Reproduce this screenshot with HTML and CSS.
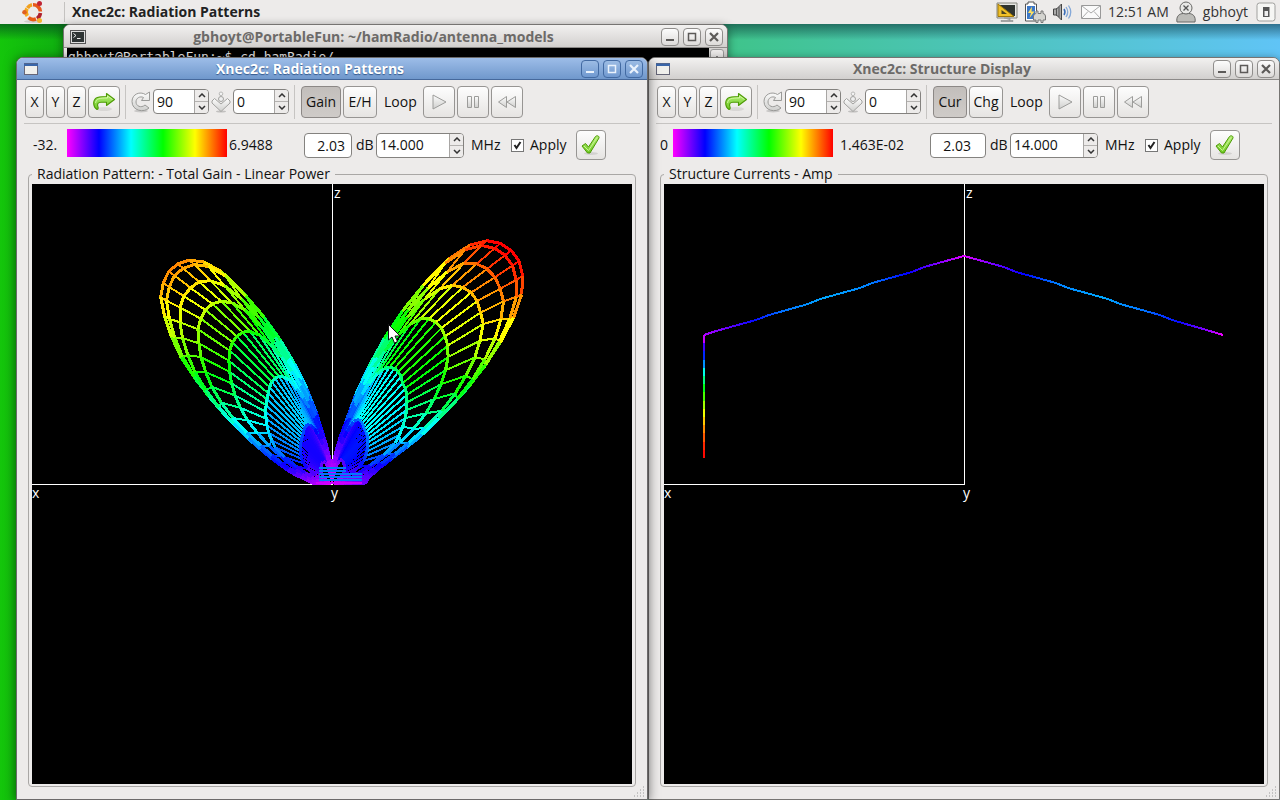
FILE: index.html
```html
<!DOCTYPE html>
<html lang="en">
<head>
<meta charset="utf-8">
<title>Xnec2c: Radiation Patterns</title>
<link rel="stylesheet" href="styles.css">
</head>
<body>
<svg class="defs" aria-hidden="true">
  <defs>
    <linearGradient id="g-green" x1="0" y1="0" x2="0" y2="1"><stop offset="0" stop-color="#b6f07c"/><stop offset="1" stop-color="#6cc820"/></linearGradient>
    <linearGradient id="g-grey" x1="0" y1="0" x2="0" y2="1"><stop offset="0" stop-color="#fcfcfc"/><stop offset="1" stop-color="#cfcfcd"/></linearGradient>
    <linearGradient id="g-wire-l" x1="0" y1="0" x2="1" y2="0"><stop offset="0" stop-color="#a800ff"/><stop offset=".08" stop-color="#7000ff"/><stop offset=".19" stop-color="#0808ff"/><stop offset=".3" stop-color="#0070ff"/><stop offset=".47" stop-color="#00a8ff"/><stop offset=".64" stop-color="#0080ff"/><stop offset=".78" stop-color="#0000ff"/><stop offset=".9" stop-color="#8000ff"/><stop offset="1" stop-color="#e000ff"/></linearGradient>
    <linearGradient id="g-wire-r" x1="0" y1="0" x2="1" y2="0"><stop offset="0" stop-color="#e000ff"/><stop offset=".1" stop-color="#8000ff"/><stop offset=".23" stop-color="#0000ff"/><stop offset=".36" stop-color="#0080ff"/><stop offset=".53" stop-color="#00a8ff"/><stop offset=".7" stop-color="#0070ff"/><stop offset=".83" stop-color="#0808ff"/><stop offset=".93" stop-color="#8000ff"/><stop offset="1" stop-color="#f000ff"/></linearGradient>
  </defs>
  <symbol id="i-redo" viewBox="0 0 24 24">
    <ellipse cx="12" cy="19" rx="8" ry="2" fill="#000" opacity=".08"/>
    <path d="M5 19.500C1 17 .6 11 4 8.200C6 6.600 8.500 6.500 14.500 6.500V3.500L22.500 9.500L14.500 15.500V12.200H9C6 12.200 4.800 14 6 17C6.400 18.200 6 19.500 5 19.500Z" fill="url(#g-green)" stroke="#4e9a06" stroke-width="1.100" stroke-linejoin="round"/>
    <path d="M3.500 13C4.500 8.500 7 8 15.500 8V6L20.500 9.500" fill="none" stroke="#d9fba8" stroke-width=".8"/>
  </symbol>
  <symbol id="i-rotate" viewBox="0 0 20 22">
    <ellipse cx="10" cy="20" rx="7" ry="1.500" fill="#000" opacity=".15"/>
    <path d="M14.500 3.500L18.500 1V9.500H10.500L12.500 6.500C9 4.800 5 7 5 11C5 15 10 17.500 14 14L18 17C13 22 1 20 1 10.500C1 3 9 0 14.500 3.500Z" fill="url(#g-grey)" stroke="#9a9a98" stroke-linejoin="round"/>
  </symbol>
  <symbol id="i-down" viewBox="0 0 20 22">
    <ellipse cx="10" cy="20.500" rx="5" ry="1" fill="#000" opacity=".18"/>
    <path d="M1 10L3.500 7.500L10 13L16.500 7.500L19 10V12L10 20.500L1 12Z" fill="url(#g-grey)" stroke="#a2a2a0" stroke-linejoin="round"/>
    <circle cx="10" cy="8" r="2.500" fill="#eee" stroke="#a2a2a0"/><circle cx="10" cy="2.800" r="1.800" fill="#f4f4f4" stroke="#b8b8b6"/>
  </symbol>
  <symbol id="i-play" viewBox="0 0 20 20"><path d="M4 3L17 10L4 17Z" fill="url(#g-grey)" stroke="#9c9c9a"/></symbol>
  <symbol id="i-pause" viewBox="0 0 20 20"><path d="M4.500 4.500H8.500V15.500H4.500ZM11.500 4.500H15.500V15.500H11.500Z" fill="url(#g-grey)" stroke="#9c9c9a"/></symbol>
  <symbol id="i-rewind" viewBox="0 0 20 20"><path d="M9.500 4.500V15.500L1.500 10ZM18.500 4.500V15.500L10 10Z" fill="url(#g-grey)" stroke="#9c9c9a"/></symbol>
  <symbol id="i-check" viewBox="0 0 22 22">
    <ellipse cx="11" cy="19.500" rx="7" ry="1.500" fill="#000" opacity=".1"/>
    <path d="M2 12L5.500 9.500L8.500 13L15.500 2.500C17 1 19.500 2 19 4L10 19H7.500Z" fill="url(#g-green)" stroke="#4e9a06" stroke-linejoin="round"/>
    <path d="M4 12L8.500 16.500L17 3.500" fill="none" stroke="#c8f58e"/>
  </symbol>
  <symbol id="i-tick" viewBox="0 0 13 13"><path d="M3.500 6L5.500 9L9.500 3" fill="none" stroke="#222" stroke-width="2"/></symbol>
  <symbol id="i-up" viewBox="0 0 8 5"><path d="M1 4L4 1L7 4" fill="none" stroke="#333" stroke-width="1.500"/></symbol>
  <symbol id="i-dn" viewBox="0 0 8 5"><path d="M1 1L4 4L7 1" fill="none" stroke="#333" stroke-width="1.500"/></symbol>
  <symbol id="i-min" viewBox="0 0 16 16"><path d="M4 11H12" fill="none" stroke="currentColor" stroke-width="2"/></symbol>
  <symbol id="i-max" viewBox="0 0 16 16"><path d="M4.500 4.500H11.500V11.500H4.500Z" fill="none" stroke="currentColor" stroke-width="1.500"/></symbol>
  <symbol id="i-close" viewBox="0 0 16 16"><path d="M4 4L12 12M12 4L4 12" fill="none" stroke="currentColor" stroke-width="2.200"/></symbol>
</svg>

<header class="panel">
  <div class="panel-left">
    <svg class="logo" viewBox="0 0 24 24" aria-label="Ubuntu">
      <ellipse cx="12" cy="21.500" rx="9" ry="1.500" fill="#000" opacity=".12"/>
      <g fill="none" stroke-width="3.600">
        <path d="M6.500 8A7.200 7.200 0 0 1 11 4.800" stroke="#f0a020"/>
        <path d="M6 8.500A7.200 7.200 0 0 0 6.300 16" stroke="#f6a81c"/>
        <path d="M7.500 17.700A7.200 7.200 0 0 0 15 19" stroke="#e85a14"/>
        <path d="M12 4.800A7.200 7.200 0 0 1 19.400 11.500" stroke="#e8581a"/>
        <path d="M19.400 13A7.200 7.200 0 0 1 16 18.500" stroke="#b0202c"/>
      </g>
      <circle cx="3.500" cy="12.300" r="2.300" fill="#e06020"/><circle cx="18.500" cy="3.500" r="2.500" fill="#c02434"/><circle cx="18.500" cy="20.500" r="2.500" fill="#f2b42c"/>
    </svg>
    <span class="panel-title">Xnec2c: Radiation Patterns</span>
  </div>
  <div class="panel-right">
    <svg class="tray" viewBox="0 0 22 20"><path d="M1 1H21V16H1Z" fill="#e6e6e2" stroke="#85857f"/><path d="M3 3H19V14H3Z" fill="#303430"/><path d="M2 2L18 14.500H2Z" fill="#f0c028" stroke="#a07808"/><path d="M5.500 8L11 12H5.500Z" fill="#4a4420"/><path d="M8 16H14V18.500H5V19.500H17V18.500H14" fill="#aaa" stroke="#888" stroke-width=".6"/></svg>
    <svg class="tray" viewBox="0 0 22 22"><path d="M4 1H10V3H12.500V20H1.500V3H4Z" fill="#fff" stroke="#555"/><path d="M3 5H11V18H3Z" fill="#3c78c8"/><path d="M8 5.500L4 12H7L5.500 17L10.500 10.500H7.500Z" fill="#ffe060"/><path d="M9.500 19V15Q10 12.500 12 12.500V10H14V12.500H17V10H19V12.500Q21 12.500 21.500 15V19H19V21.500H17V19H14V21.500H12V19Z" fill="#d4d4d0" stroke="#777"/></svg>
    <svg class="tray" viewBox="0 0 22 20"><path d="M1.500 7H4.500L9.500 2V18L4.500 13H1.500Z" fill="#aaa" stroke="#444"/><path d="M4.500 6V14M7 5V15" stroke="#555"/><path d="M12 7Q14 10 12 13" fill="none" stroke="#386cb8" stroke-width="1.500"/><path d="M14 5Q17.500 10 14 15M16.500 3.500Q21 10 16.500 16.500" fill="none" stroke="#84a8d8" stroke-width="1.300"/></svg>
    <svg class="tray" viewBox="0 0 22 20"><path d="M1.500 3.500H20.500V16.500H1.500Z" fill="#fafafa" stroke="#999"/><path d="M2 4L11 11L20 4M2 16L8 9.500M20 16L14 9.500" fill="none" stroke="#aaa"/></svg>
    <time class="clock">12:51 AM</time>
    <svg class="tray" viewBox="0 0 20 22"><path d="M1 21C0 15.500 3 12.500 7.500 12.500H12.500C17 12.500 20 15.500 19 21Z" fill="#bcbcb8" stroke="#686866"/><circle cx="10" cy="7" r="6" fill="#e8e8e6" stroke="#686866"/><path d="M7.500 4.500L12.500 9.500M12.500 4.500L7.500 9.500" stroke="#555" stroke-width="1.300"/></svg>
    <span class="user">gbhoyt</span>
    <svg class="tray power" viewBox="0 0 20 20"><rect x="1" y="1" width="18" height="18" rx="2.500" fill="#f6f6f4" stroke="#a0a09e"/><rect x="7" y="5" width="6.500" height="10" fill="#555"/><rect x="8.500" y="9" width="3.500" height="5" fill="#eee"/></svg>
  </div>
</header>

<main class="desktop">
  <section class="window terminal">
    <div class="titlebar">
      <svg class="win-icon" viewBox="0 0 16 14"><rect x=".5" y=".5" width="15" height="13" fill="#ddd" stroke="#555"/><rect x="2" y="2" width="12" height="10" fill="#2e3434"/><path d="M3.500 3.500L6 5.500L3.500 7.500M7 8.500H10.500" fill="none" stroke="#eee"/></svg>
      <h2 class="title">gbhoyt@PortableFun: ~/hamRadio/antenna_models</h2>
      <div class="win-buttons">
        <button aria-label="Minimize"><svg><use href="#i-min"/></svg></button>
        <button aria-label="Maximize"><svg><use href="#i-max"/></svg></button>
        <button aria-label="Close"><svg><use href="#i-close"/></svg></button>
      </div>
    </div>
    <div class="term-body"><pre class="shell">gbhoyt@PortableFun:~$ cd hamRadio/</pre><div class="scroll"><button aria-label="Scroll up"><svg class="arrow"><use href="#i-up"/></svg></button></div></div>
  </section>

  <section class="window active radiation">
    <div class="titlebar">
      <svg class="win-icon" viewBox="0 0 16 14"><rect x="1.500" y="1.500" width="13" height="11" fill="#f0f0ec" stroke="#667"/><path d="M1 1.500H15V4H1Z" fill="#3a66a8"/></svg>
      <h2 class="title">Xnec2c: Radiation Patterns</h2>
      <div class="win-buttons">
        <button aria-label="Minimize"><svg><use href="#i-min"/></svg></button>
        <button aria-label="Maximize"><svg><use href="#i-max"/></svg></button>
        <button aria-label="Close"><svg><use href="#i-close"/></svg></button>
      </div>
    </div>
    <div class="client">
      <div class="toolbar">
        <div class="group axes"><button>X</button><button>Y</button><button>Z</button><button class="icon-btn" aria-label="Default view"><svg class="i24"><use href="#i-redo"/></svg></button></div>
        <div class="group spins">
          <svg class="i20"><use href="#i-rotate"/></svg>
          <div class="spin short"><input type="text" value="90" aria-label="Rotate"><div class="steps"><button aria-label="Up"><svg class="arrow"><use href="#i-up"/></svg></button><button aria-label="Down"><svg class="arrow"><use href="#i-dn"/></svg></button></div></div>
          <svg class="i20"><use href="#i-down"/></svg>
          <div class="spin short"><input type="text" value="0" aria-label="Incline"><div class="steps"><button aria-label="Up"><svg class="arrow"><use href="#i-up"/></svg></button><button aria-label="Down"><svg class="arrow"><use href="#i-dn"/></svg></button></div></div>
        </div>
        <div class="group modes"><button class="mode pressed">Gain</button><button class="mode">E/H</button><span class="loop">Loop</span><button class="icon-btn" aria-label="Play"><svg class="i20"><use href="#i-play"/></svg></button><button class="icon-btn" aria-label="Pause"><svg class="i20"><use href="#i-pause"/></svg></button><button class="icon-btn" aria-label="Rewind"><svg class="i20"><use href="#i-rewind"/></svg></button></div>
      </div>
      <div class="readouts">
        <span class="low">-32.</span><div class="scale"></div><span class="high">6.9488</span>
        <input class="gain" type="text" value="2.03" id="gain-a"><label class="db" for="gain-a">dB</label>
        <div class="spin"><input type="text" value="14.000" id="freq-a"><div class="steps"><button aria-label="Up"><svg class="arrow"><use href="#i-up"/></svg></button><button aria-label="Down"><svg class="arrow"><use href="#i-dn"/></svg></button></div></div>
        <label class="mhz" for="freq-a">MHz</label>
        <label class="apply"><span class="tickbox"><input type="checkbox" checked><svg><use href="#i-tick"/></svg></span>Apply</label>
        <button class="ok" aria-label="Apply now"><svg class="i22"><use href="#i-check"/></svg></button>
      </div>
      <fieldset class="view">
        <legend>Radiation Pattern: - Total Gain - Linear Power</legend>
        <svg class="plot" viewBox="0 0 600 600" preserveAspectRatio="xMidYMin meet">
          <path class="axis" d="M300.500 0V300.500H0"/>
          <g id="lobes" shape-rendering="crispEdges" fill="none"></g>
          <text x="302" y="14">z</text><text x="0" y="314">x</text><text x="299" y="314">y</text>
          <path d="M356.500 140.500V156L360 153L362.500 159L365.500 157.500L363 152H368Z" fill="#fff" stroke="#111"/>
        </svg>
      </fieldset>
    </div>
    <svg class="grip" viewBox="0 0 12 12"><path d="M10 1h1M7 4h1M10 4h1M4 7h1M7 7h1M10 7h1M1 10h1M4 10h1M7 10h1M10 10h1" stroke="#999"/></svg>
  </section>

  <section class="window structure">
    <div class="titlebar">
      <svg class="win-icon" viewBox="0 0 16 14"><rect x="1.500" y="1.500" width="13" height="11" fill="#f0f0ec" stroke="#667"/><path d="M1 1.500H15V4H1Z" fill="#3a66a8"/></svg>
      <h2 class="title">Xnec2c: Structure Display</h2>
      <div class="win-buttons">
        <button aria-label="Minimize"><svg><use href="#i-min"/></svg></button>
        <button aria-label="Maximize"><svg><use href="#i-max"/></svg></button>
        <button aria-label="Close"><svg><use href="#i-close"/></svg></button>
      </div>
    </div>
    <div class="client">
      <div class="toolbar">
        <div class="group axes"><button>X</button><button>Y</button><button>Z</button><button class="icon-btn" aria-label="Default view"><svg class="i24"><use href="#i-redo"/></svg></button></div>
        <div class="group spins">
          <svg class="i20"><use href="#i-rotate"/></svg>
          <div class="spin short"><input type="text" value="90" aria-label="Rotate"><div class="steps"><button aria-label="Up"><svg class="arrow"><use href="#i-up"/></svg></button><button aria-label="Down"><svg class="arrow"><use href="#i-dn"/></svg></button></div></div>
          <svg class="i20"><use href="#i-down"/></svg>
          <div class="spin short"><input type="text" value="0" aria-label="Incline"><div class="steps"><button aria-label="Up"><svg class="arrow"><use href="#i-up"/></svg></button><button aria-label="Down"><svg class="arrow"><use href="#i-dn"/></svg></button></div></div>
        </div>
        <div class="group modes"><button class="mode pressed">Cur</button><button class="mode">Chg</button><span class="loop">Loop</span><button class="icon-btn" aria-label="Play"><svg class="i20"><use href="#i-play"/></svg></button><button class="icon-btn" aria-label="Pause"><svg class="i20"><use href="#i-pause"/></svg></button><button class="icon-btn" aria-label="Rewind"><svg class="i20"><use href="#i-rewind"/></svg></button></div>
      </div>
      <div class="readouts">
        <span class="low">0</span><div class="scale"></div><span class="high">1.463E-02</span>
        <input class="gain" type="text" value="2.03" id="gain-b"><label class="db" for="gain-b">dB</label>
        <div class="spin"><input type="text" value="14.000" id="freq-b"><div class="steps"><button aria-label="Up"><svg class="arrow"><use href="#i-up"/></svg></button><button aria-label="Down"><svg class="arrow"><use href="#i-dn"/></svg></button></div></div>
        <label class="mhz" for="freq-b">MHz</label>
        <label class="apply"><span class="tickbox"><input type="checkbox" checked><svg><use href="#i-tick"/></svg></span>Apply</label>
        <button class="ok" aria-label="Apply now"><svg class="i22"><use href="#i-check"/></svg></button>
      </div>
      <fieldset class="view">
        <legend>Structure Currents - Amp</legend>
        <svg class="plot" viewBox="0 0 600 600" preserveAspectRatio="xMidYMin meet">
          <path class="axis" d="M300.500 0V300.500H0"/>
          <g shape-rendering="crispEdges" fill="none" stroke-width="2">
            <path stroke="url(#g-wire-l)" d="M40 151L52 147L92 136L105 131L144 120L156 115L196 104L208 99L248 88L260 83L300 72"/>
            <path stroke="url(#g-wire-r)" d="M300 72L340 83L352 88L392 99L404 104L444 115L456 120L496 131L508 136L546 147L559 151"/>
            <g id="mast"></g>
          </g>
          <text x="302" y="14">z</text><text x="0" y="314">x</text><text x="299" y="314">y</text>
        </svg>
      </fieldset>
    </div>
    <svg class="grip" viewBox="0 0 12 12"><path d="M10 1h1M7 4h1M10 4h1M4 7h1M7 7h1M10 7h1M1 10h1M4 10h1M7 10h1M10 10h1" stroke="#999"/></svg>
  </section>
</main>
<script src="plot.js"></script>
</body>
</html>
```
FILE: styles.css
```css
* { box-sizing: border-box; }
body {
  margin: 0;
  height: 100vh;
  display: flex;
  flex-direction: column;
  overflow: hidden;
  font: 14px/20px "Open Sans", "Noto Sans", sans-serif;
  color: #111;
}
.defs { position: absolute; width: 0; height: 0; }
button, input { font: inherit; color: inherit; margin: 0; padding: 0; }
button { display: flex; align-items: center; justify-content: center; }

.panel {
  display: flex;
  justify-content: space-between;
  height: 24px;
  background: #edebea;
  color: #333;
}
.panel-left, .panel-right { display: flex; align-items: center; }
.panel-left { padding-left: 21px; }
.logo { width: 24px; height: 24px; margin-right: 19px; }
.panel-title { border-left: 1px solid #c4c2c0; padding-left: 7px; font-weight: 700; color: #222; }
.panel-right { gap: 6px; padding-right: 4px; }
.tray { width: 22px; height: 22px; }
.power { width: 20px; margin-left: 2px; }

.desktop {
  position: relative;
  flex: 1;
  background:
    linear-gradient(rgba(0, 30, 40, .5), rgba(0, 30, 40, 0) 16px),
    linear-gradient(90deg, #14c60b, #0fae10 5%, #3fc48b 57%, #4dc4bb 77%, #60c4f6);
}
.window {
  position: absolute;
  display: flex;
  flex-direction: column;
  background: #edebea;
  border: 1px solid #767472;
  border-radius: 7px 7px 0 0;
  box-shadow: 0 2px 10px rgba(0, 0, 0, .45);
}
.terminal { left: 63px; right: calc(50% - 88px); top: 0; bottom: 500px; }
.radiation { left: 16px; right: calc(50% - 8px); top: 33px; bottom: 0; z-index: 2; }
.structure { left: calc(50% + 8px); right: 0; top: 33px; bottom: 0; }
.titlebar {
  display: flex;
  align-items: center;
  height: 23px;
  padding: 1px 4px 0 6px;
  border-bottom: 1px solid #8c8a88;
  border-radius: 6px 6px 0 0;
  background: linear-gradient(#f2f1f0, #d2d0ce);
  color: #6c6a68;
}
.title { flex: 1; margin: 0; text-align: center; font-size: 14px; line-height: 20px; font-weight: 700; }
.active { border-color: #6c6a6a; box-shadow: 0 2px 12px rgba(0, 0, 0, .6); }
.active .titlebar { background: linear-gradient(#9dbde8, #7098cc); border-color: #46699c; color: #fff; }
.active .title { text-shadow: 0 1px 1px #34588c; }
.win-icon { width: 16px; height: 14px; }
.win-buttons { display: flex; gap: 4px; }
.win-buttons button {
  width: 18px;
  height: 18px;
  border: 1px solid #8f8d8b;
  border-radius: 4px;
  background: linear-gradient(#fcfcfc, #dddbd9);
  color: #5c5a58;
}
.win-buttons svg { width: 16px; height: 16px; flex: none; }
.active .win-buttons button { border-color: #426aa2; background: linear-gradient(#9cbce4, #7099d0); color: #eaf2fc; }

.term-body { flex: 1; display: flex; justify-content: space-between; background: #000; margin-left: 3px; overflow: hidden; }
.shell { margin: 0; padding: 1px; color: #eee; font: 13px/16px "DejaVu Sans Mono", monospace; }
.scroll { width: 18px; background: #d4d2d0; padding: 1px; }
.scroll button { width: 14px; height: 18px; background: #edebea; border: 1px solid #999; border-radius: 3px; }

.client { flex: 1; display: flex; flex-direction: column; padding: 0 7px; }
.toolbar { display: flex; align-items: center; height: 44px; padding: 4px 1px; border-bottom: 1px solid #c6c4c2; }
.group { display: flex; align-items: center; height: 34px; }
.group + .group { border-left: 1px solid #c6c4c2; }
.axes { gap: 2px; padding-right: 5px; }
.spins { gap: 2px; padding: 0 5px; }
.modes { gap: 2px; padding-left: 6px; }
.toolbar .group > button, .ok {
  height: 32px;
  border: 1px solid #979593;
  border-radius: 4px;
  background: linear-gradient(#fdfdfd, #e6e4e2);
}
.axes button { width: 19px; }
.toolbar .group > .icon-btn { width: 32px; }
.mode { width: 34px; }
.toolbar .group > .pressed { background: linear-gradient(#c2bebb, #cfcbc8); border-color: #8c8886; }
.radiation .mode.pressed { width: 40px; }
.loop { width: 42px; padding-left: 5px; }
.i20 { width: 20px; height: 22px; flex: none; }
.i22 { width: 22px; height: 22px; }
.i24 { width: 24px; height: 24px; flex: none; }
.spin {
  display: flex;
  width: 88px;
  height: 25px;
  border: 1px solid #84827f;
  border-radius: 4px;
  background: #fff;
  overflow: hidden;
}
.short { width: 56px; }
.spin input { flex: 1; min-width: 0; padding-left: 3px; border: 0; background: none; }
.steps { width: 14px; display: flex; flex-direction: column; border-left: 1px solid #a8a6a4; }
.steps button { flex: 1; border: 0; background: #edebea; }
.steps button + button { border-top: 1px solid #b4b2b0; }
.arrow { width: 8px; height: 5px; flex: none; }

.readouts { display: flex; align-items: center; height: 42px; padding-left: 9px; }
.low { width: 34px; }
.scale { width: 160px; height: 28px; margin-bottom: 4px; background: linear-gradient(90deg, #f0f, #00f 20%, #0ff 40%, #0f0 60%, #ff0 80%, #f00); }
.high { width: 75px; margin-left: 2px; }
.gain { width: 48px; height: 25px; border: 1px solid #84827f; border-radius: 4px; background: #fff; text-align: right; padding-right: 6px; }
.db { width: 20px; margin-left: 4px; }
.mhz { width: 40px; margin-left: 7px; }
.apply { display: flex; align-items: center; gap: 6px; width: 64px; }
.tickbox { position: relative; width: 13px; height: 13px; flex: none; }
.tickbox input { appearance: none; display: block; width: 13px; height: 13px; border: 1px solid #777; background: #fff; }
.tickbox svg { position: absolute; inset: 0; width: 13px; height: 13px; pointer-events: none; }
.ok { width: 30px; height: 30px; margin-left: 1px; }
.structure .readouts { padding-left: 4px; }
.structure .low { width: 13px; }
.structure .high { width: 90px; margin-left: 7px; }
.structure .gain { width: 56px; padding-right: 14px; }

.view {
  flex: 1;
  min-width: 0;
  display: flex;
  margin: 0 4px 12px;
  padding: 2px 3px;
  border: 1px solid #a9a7a5;
  border-radius: 4px;
}
.view legend { padding: 0 5px; line-height: 16px; }
.plot { display: block; width: 100%; height: 100%; background: #000; }
.plot text { fill: #fff; font: 14px "Open Sans", sans-serif; }
.axis { fill: none; stroke: #fff; stroke-width: 1; shape-rendering: crispEdges; }
.grip { position: absolute; right: 2px; bottom: 1px; width: 12px; height: 12px; }
```
FILE: plot.js
```js
const NS = "http://www.w3.org/2000/svg";
const STOPS = [[255, 0, 255], [0, 0, 255], [0, 255, 255], [0, 255, 0], [255, 255, 0], [255, 0, 0]];
const RAD = Math.PI / 180;

function colour(t) {
  const p = Math.max(0, Math.min(0.9999, t)) * 5;
  const i = Math.floor(p);
  const c = STOPS[i].map((v, k) => Math.round(v + (STOPS[i + 1][k] - v) * (p - i)));
  return `rgb(${c.join(",")})`;
}

function line(parent, a, b, stroke, width) {
  const el = document.createElementNS(NS, "path");
  el.setAttribute("d", `M${a[0].toFixed(1)} ${a[1].toFixed(1)}L${b[0].toFixed(1)} ${b[1].toFixed(1)}`);
  el.setAttribute("stroke", stroke);
  el.setAttribute("stroke-width", width);
  parent.appendChild(el);
}

function lookup(table, x) {
  for (let i = 1; i < table.length; i++) {
    const [x0, y0] = table[i - 1], [x1, y1] = table[i];
    if (x <= x1) return y0 + (y1 - y0) * (x - x0) / (x1 - x0);
  }
  return table[table.length - 1][1];
}

// Gain against zenith angle, in plot units.
const RIGHT = [[0, 17], [6, 28], [12, 58], [17, 118], [20, 158], [22.5, 191], [25, 223], [28, 260], [31, 284], [34, 293], [37, 295], [40, 291], [44, 277], [48, 242], [52, 197], [56, 150], [60, 113], [66, 68], [72, 48], [80, 37], [90, 33]];
const LEFT = [[0, 17], [6, 28], [10.5, 53], [16.6, 118], [20, 156], [24, 201], [28, 245], [31, 262], [34, 269], [38, 268], [42, 257], [46, 230], [50, 197], [55, 146], [61, 97], [66, 70], [71, 51], [80, 27], [90, 17]];
// Extents of each azimuth cut relative to the broadside cut, and how far its lower edge droops.
const SX = [1, 0.965, 0.89, 0.78, 0.6, 0.37, 0.167, 0.06];
const SZ = [1, 0.98, 0.906, 0.816, 0.68, 0.48, 0.265, 0.1];
const DROOP = [0, 1, 2, 3, 4, 12, 16, 10];
const STEP = 2.5;

function project(table, t, k) {
  const a = t * RAD, r = lookup(table, t);
  const x = r * Math.sin(a) * SX[k], z = r * Math.cos(a) * SZ[k];
  const ramp = t < 42 ? 0 : t < 54 ? (t - 42) / 12 : (90 - t) / 36;
  return { angle: Math.atan2(x, z) / RAD + DROOP[k] * ramp, r: Math.hypot(x, z) };
}

function point(table, dir, theta, k) {
  const cos = Math.cos(k * 10 * RAD);
  const target = theta >= 90 ? 90 : Math.atan(Math.tan(theta * RAD) * cos) / RAD;
  let lo = 0, hi = 90;
  for (let i = 0; i < 24; i++) {
    const mid = (lo + hi) / 2;
    if (project(table, mid, k).angle < target) lo = mid; else hi = mid;
  }
  const r = project(table, hi, k).r;
  const x = r * Math.sin(target * RAD), z = r * Math.cos(target * RAD);
  return { p: [300 + dir * x, 300 - z], r: Math.hypot(x / cos, z) };
}

const lobes = document.getElementById("lobes");
for (const [table, dir, peak] of [[LEFT, -1, 300], [RIGHT, 1, 291]]) {
  for (let k = 0; k < SX.length; k++) {
    for (let t = 0; t <= 90 && k + 1 < SX.length; t += STEP) {
      const a = point(table, dir, t, k), b = point(table, dir, t, k + 1);
      line(lobes, a.p, b.p, colour((a.r + b.r) / 2 / peak), 2);
    }
    for (let t = 0; t < 90; t += STEP) {
      const a = point(table, dir, t, k), b = point(table, dir, t + STEP, k);
      line(lobes, a.p, b.p, colour((a.r + b.r) / 2 / peak), 3);
    }
  }
}
for (let y = 284; y < 298; y += 3) line(lobes, [287, y], [y < 290 ? 314 : 330, y], "#0078ff", 2);
line(lobes, [284, 299], [330, 299], "#d000ff", 2);

const mast = document.getElementById("mast");
const MAST = ["#c800ff", "#4000ff", "#0028ff", "#0090ff", "#00ffe8", "#00ff80", "#00ff18", "#48ff00", "#a0ff00", "#f0ff00", "#ffc800", "#ff8c00", "#ff5800", "#ff2800", "#ff0800"];
MAST.forEach((c, i) => line(mast, [40, 151 + i * 8.2], [40, 159.2 + i * 8.2], c, 2));
```
